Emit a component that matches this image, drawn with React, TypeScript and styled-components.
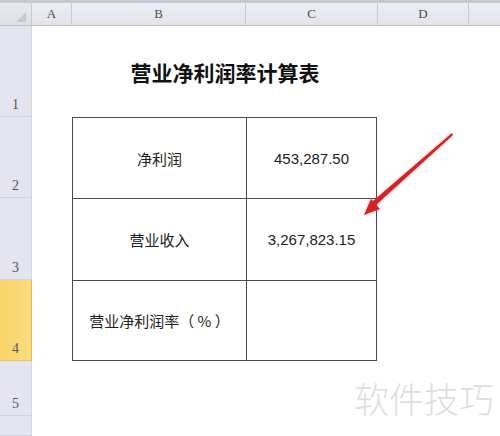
import React from "react";
import styled, { createGlobalStyle } from "styled-components";

const Global = createGlobalStyle`
  html, body { margin: 0; padding: 0; background: #ffffff; }
  body { font-family: "Liberation Sans", Arial, sans-serif; }
  * { box-sizing: border-box; }
`;

const Sheet = styled.div`
  position: relative;
  width: 500px;
  height: 436px;
  overflow: hidden;
  display: grid;
  grid-template-columns: 32px 40px 174px 132px 91px 1fr;
  grid-template-rows: 26px 91px 81px 82px 81px 55px 1fr;
  background: #ffffff;
`;

const ColHead = styled.div<{ $last?: boolean }>`
  border-top: 3px solid #c5c9d1;
  border-bottom: 1px solid #b9bdc6;
  border-right: ${(p) => (p.$last ? "none" : "1px solid #c9ccd4")};
  background: linear-gradient(#eceef3, #e2e4ea);
  display: flex;
  align-items: center;
  justify-content: center;
  font-family: "Liberation Serif", "Times New Roman", serif;
  font-size: 13px;
  color: #4e4e4e;
`;

const Corner = styled(ColHead)`
  position: relative;
  background: linear-gradient(#e8e9f0, #dfe1e8);
`;

const CornerMark = styled.svg`
  position: absolute;
  right: 5px;
  bottom: 3px;
`;

const RowHead = styled.div<{ $selected?: boolean }>`
  background: ${(p) =>
    p.$selected
      ? "linear-gradient(90deg, #f8d468, #fadc80)"
      : "#e4e5ee"};
  border-bottom: 1px solid ${(p) => (p.$selected ? "#e9c45a" : "#d3d5de")};
  border-right: 1px solid ${(p) => (p.$selected ? "#e2bd55" : "#d3d5de")};
  display: flex;
  align-items: flex-end;
  justify-content: center;
  padding-bottom: 3px;
  font-family: "Liberation Serif", "Times New Roman", serif;
  font-size: 14px;
  color: #555;
`;

const Title = styled.div`
  grid-column: 3 / 5;
  grid-row: 2;
  display: flex;
  align-items: center;
  justify-content: center;
  font-family: "Noto Sans CJK SC", sans-serif;
  font-weight: 700;
  font-size: 21px;
  color: #111;
`;

const Table = styled.div`
  grid-column: 3 / 5;
  grid-row: 3 / 6;
  display: grid;
  grid-template-columns: 173px 1fr;
  grid-template-rows: 80px 81px 1fr;
  gap: 1px;
  padding: 1px;
  background: #4a4a4a;
  margin-right: 1px;
`;

const Cell = styled.div<{ $num?: boolean }>`
  background: #ffffff;
  display: flex;
  align-items: center;
  justify-content: center;
  white-space: pre;
  font-family: ${(p) =>
    p.$num
      ? '"Liberation Sans", Arial, sans-serif'
      : '"Noto Sans CJK SC", sans-serif'};
  font-size: 15px;
  color: #222;
`;

const Arrow = styled.svg`
  position: absolute;
  left: 0;
  top: 0;
  pointer-events: none;
`;

const Watermark = styled.div`
  position: absolute;
  left: 354px;
  top: 380px;
  font-family: "Noto Sans CJK SC", sans-serif;
  font-weight: 300;
  font-size: 35px;
  color: #dedede;
  line-height: 1;
`;

export default function App() {
  const cols = ["A", "B", "C", "D", ""];
  const rows = [
    { n: "1" },
    { n: "2" },
    { n: "3" },
    { n: "4", sel: true },
    { n: "5" },
    { n: "" },
  ];
  return (
    <>
      <Global />
      <Sheet>
        <Corner>
          <CornerMark width="10" height="10" viewBox="0 0 10 10">
            <polygon points="10,0 10,10 0,10" fill="#c7c9d1" />
          </CornerMark>
        </Corner>
        {cols.map((c, i) => (
          <ColHead key={i} $last={i === cols.length - 1}>
            {c}
          </ColHead>
        ))}
        {rows.map((r, i) => (
          <RowHead
            key={i}
            $selected={r.sel}
            style={{ gridRow: i + 2, gridColumn: 1 }}
          >
            {r.n}
          </RowHead>
        ))}
        <Title>营业净利润率计算表</Title>
        <Table>
          <Cell>净利润</Cell>
          <Cell $num>453,287.50</Cell>
          <Cell>营业收入</Cell>
          <Cell $num>3,267,823.15</Cell>
          <Cell>营业净利润率（ % ）</Cell>
          <Cell $num></Cell>
        </Table>
        <Arrow width="500" height="436" viewBox="0 0 500 436">
          <defs>
            <filter id="glow" x="-20%" y="-20%" width="140%" height="140%">
              <feGaussianBlur stdDeviation="1.6" />
            </filter>
          </defs>
          <g opacity="0.55" filter="url(#glow)">
            <polygon
              points="452,133 453,135 376,205 380,209 364,215 371,199 373,201"
              fill="#f06060"
            />
          </g>
          <polygon
            points="452,133 453,135 376,205 380,209 364,215 371,199 373,201"
            fill="#d42227"
          />
        </Arrow>
        <Watermark>软件技巧</Watermark>
      </Sheet>
    </>
  );
}
